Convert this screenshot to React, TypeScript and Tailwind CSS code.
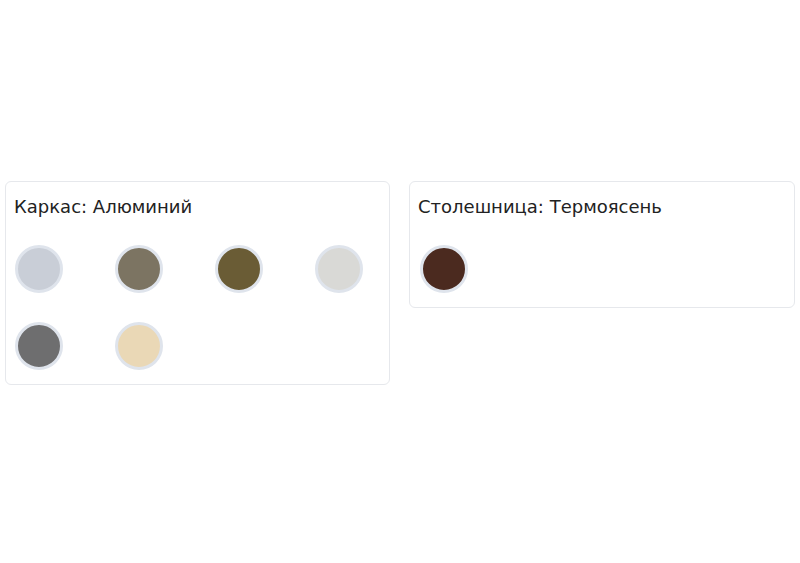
const frame = [
  { name: "Серебро", color: "#c9ced7" },
  { name: "Бронза светлая", color: "#7c7462" },
  { name: "Бронза", color: "#6a5c35" },
  { name: "Белый", color: "#d9d9d6" },
  { name: "Графит", color: "#6e6e6f" },
  { name: "Шампань", color: "#ead8b6" },
];

const top = [{ name: "Термоясень", color: "#4b2a1f" }];

function Swatch({ color }: { color: string }) {
  return (
    <div
      className="w-[48px] h-[48px] rounded-full border-[3px] border-[#dfe4ec] box-border"
      style={{ backgroundColor: color }}
    />
  );
}

export default function App() {
  return (
    <div className="min-h-[563px] bg-white pt-[181px] px-[5px] flex items-start gap-[19px] font-['DejaVu_Sans',sans-serif] text-[#222222]">
      <div className="w-[385px] border border-[#e6e8ec] rounded-md pt-[13px] pb-[14px]">
        <div className="pl-[8px] text-[18px] leading-[24px]">Каркас: Алюминий</div>
        <div className="mt-[26px] pl-[9px] grid grid-cols-[repeat(4,100px)] gap-y-[29px]">
          {frame.map((c) => (
            <Swatch key={c.name} color={c.color} />
          ))}
        </div>
      </div>
      <div className="w-[386px] border border-[#e6e8ec] rounded-md pt-[13px] pb-[14px]">
        <div className="pl-[8px] text-[18px] leading-[24px]">Столешница: Термоясень</div>
        <div className="mt-[26px] pl-[10px] flex">
          {top.map((c) => (
            <Swatch key={c.name} color={c.color} />
          ))}
        </div>
      </div>
    </div>
  );
}
